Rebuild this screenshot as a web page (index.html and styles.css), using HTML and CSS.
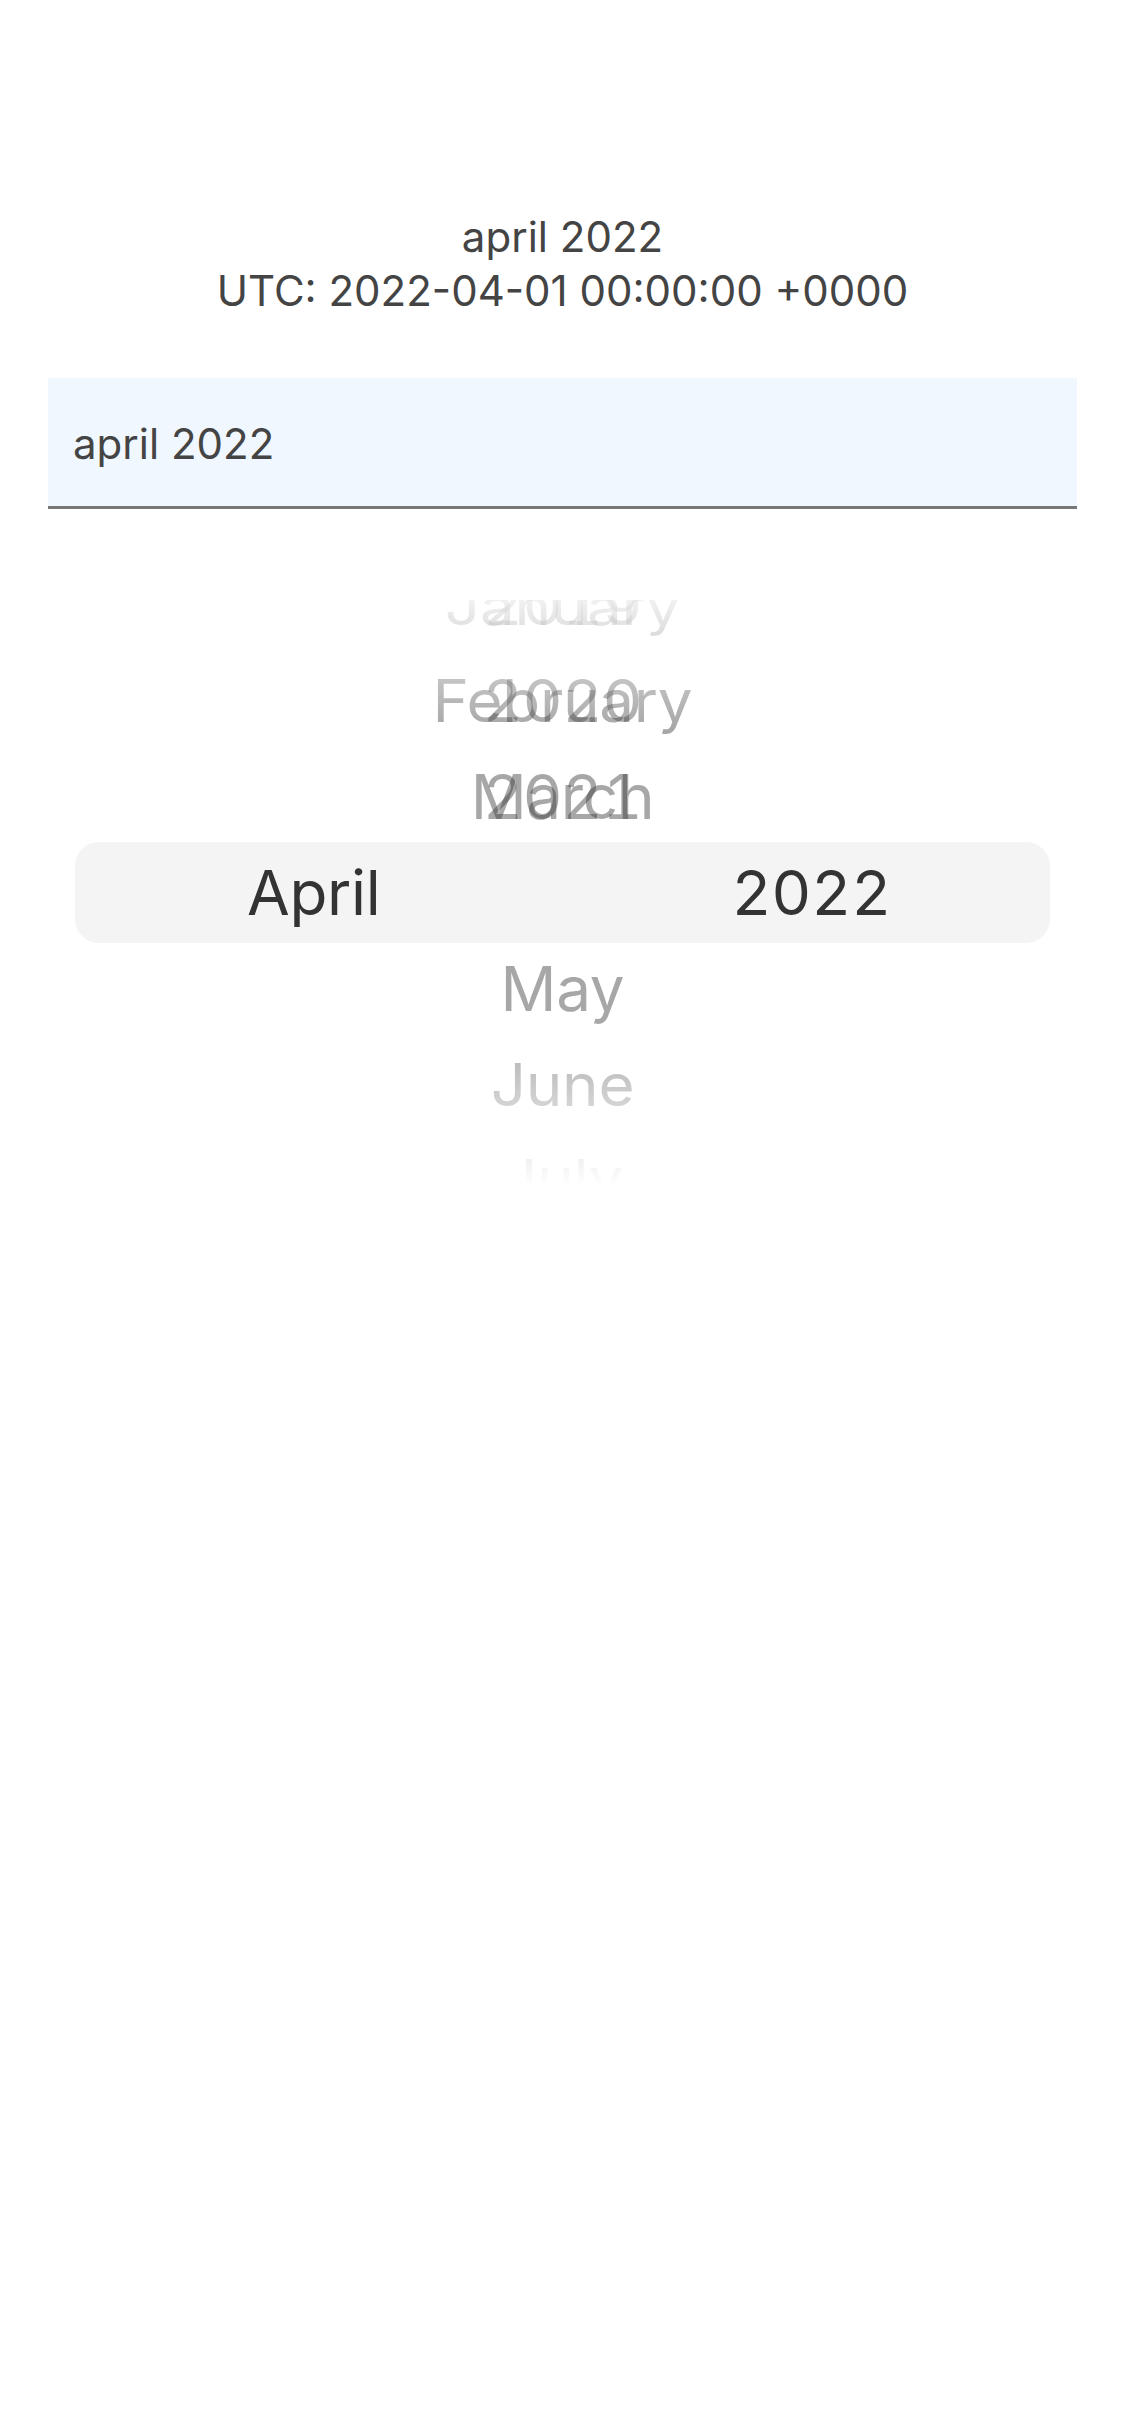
FILE: index.html
```html
<!DOCTYPE html>
<html lang="en">
<head>
<meta charset="utf-8">
<title>Month picker</title>
<link rel="stylesheet" href="styles.css">
</head>
<body>
<main class="screen">
  <header class="summary">
    <div class="summary-line">april 2022</div>
    <div class="summary-line">UTC: 2022-04-01 00:00:00 +0000</div>
  </header>

  <div class="field">
    <span class="field-text">april 2022</span>
  </div>

  <section class="picker">
    <div class="picker-highlight"></div>
    <div class="picker-rows">
      <div class="row dist-3 top">
        <span class="item">January</span>
        <span class="item">2019</span>
      </div>
      <div class="row dist-2">
        <span class="item">February</span>
        <span class="item">2020</span>
      </div>
      <div class="row dist-1">
        <span class="item">March</span>
        <span class="item">2021</span>
      </div>
      <div class="row selected">
        <span class="col">April</span>
        <span class="col">2022</span>
      </div>
      <div class="row dist-1">
        <span class="item">May</span>
      </div>
      <div class="row dist-2">
        <span class="item">June</span>
      </div>
      <div class="row dist-3 bottom">
        <span class="item">July</span>
      </div>
    </div>
  </section>
</main>
</body>
</html>
```

FILE: styles.css
```css
* {
  box-sizing: border-box;
}

html, body {
  margin: 0;
  padding: 0;
  background: #ffffff;
}

body {
  font-family: Inter, "Noto Sans", "Liberation Sans", sans-serif;
  color: #444444;
}

.screen {
  width: 1125px;
  min-height: 2436px;
  padding-top: 210px;
}

.summary {
  display: flex;
  flex-direction: column;
  align-items: center;
}

.summary-line {
  font-size: 42px;
  line-height: 54px;
  color: #444444;
}

.field {
  margin: 60px 48px 0;
  height: 131px;
  padding: 39px 25px 0;
  background: #f0f7fe;
  border-bottom: 3px solid #777777;
}

.field-text {
  display: block;
  font-size: 42px;
  line-height: 54px;
  color: #444444;
}

.picker {
  position: relative;
  margin: 91px 65px 0;
  height: 586px;
  overflow: hidden;
  -webkit-mask-image: linear-gradient(to bottom, rgba(0,0,0,0.16) 0%, #000 22%, #000 72%, rgba(0,0,0,0) 100%);
  mask-image: linear-gradient(to bottom, rgba(0,0,0,0.16) 0%, #000 22%, #000 72%, rgba(0,0,0,0) 100%);
}

.picker-highlight {
  position: absolute;
  left: 10px;
  right: 10px;
  top: 242px;
  height: 101px;
  background: #f4f4f4;
  border-radius: 24px;
}

.picker-rows {
  position: relative;
  display: flex;
  flex-direction: column;
  margin-top: -43px;
}

.row {
  height: 96px;
  display: grid;
  align-items: center;
  justify-items: center;
  font-size: 62px;
  line-height: 96px;
  letter-spacing: -0.3px;
  font-variant-numeric: tabular-nums;
  color: rgba(60, 60, 60, 0.45);
}

.row .item {
  grid-area: 1 / 1;
}

.row.dist-2 {
  transform: scaleY(0.95);
}

.row.dist-3.top {
  transform: translateY(2px) scaleY(0.82);
}

.row.dist-3.bottom {
  transform: translateY(-3px) scaleY(0.82);
}

.row.selected {
  grid-template-columns: 1fr 1fr;
  color: #333333;
}
```
